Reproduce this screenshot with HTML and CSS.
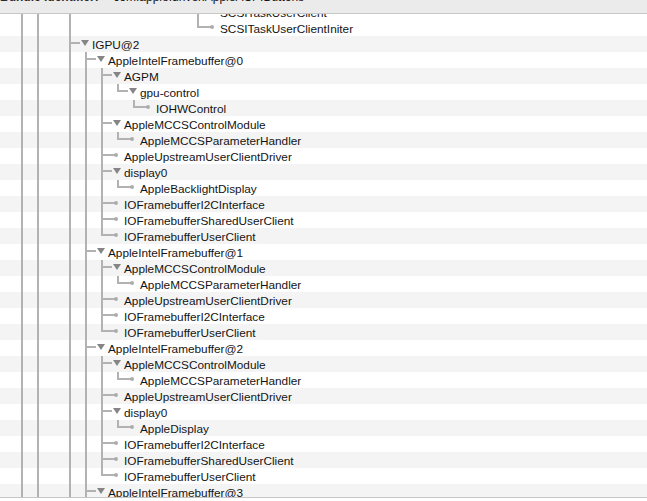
FILE: index.html
```html
<!DOCTYPE html>
<html lang="en">
<head>
  <meta charset="UTF-8" />
  <title>IORegistry Explorer</title>
  <link rel="stylesheet" href="styles.css">
</head>
<body>
  <div class="window">
    <div class="header">
      <span class="label">Bundle Identifier:</span>
      <span class="value">com.apple.driver.AppleACPIButtons</span>
    </div>
    <div class="tree" id="tree"></div>
    <div class="footer"></div>
  </div>

  <script>
    // guides: one char per 16px column -> '|' pipe, 't' tee, 'l' elbow, ' ' empty
    // node: 'v' expanded, 'o' leaf
    const rows = [
      ['|| |       t', 'o', 'SCSITaskUserClient'],
      ['|| |       l', 'o', 'SCSITaskUserClientIniter'],
      ['|| t', 'v', 'IGPU@2'],
      ['|| |t', 'v', 'AppleIntelFramebuffer@0'],
      ['|| ||t', 'v', 'AGPM'],
      ['|| |||l', 'v', 'gpu-control'],
      ['|| ||| l', 'o', 'IOHWControl'],
      ['|| ||t', 'v', 'AppleMCCSControlModule'],
      ['|| |||l', 'o', 'AppleMCCSParameterHandler'],
      ['|| ||t', 'o', 'AppleUpstreamUserClientDriver'],
      ['|| ||t', 'v', 'display0'],
      ['|| |||l', 'o', 'AppleBacklightDisplay'],
      ['|| ||t', 'o', 'IOFramebufferI2CInterface'],
      ['|| ||t', 'o', 'IOFramebufferSharedUserClient'],
      ['|| ||l', 'o', 'IOFramebufferUserClient'],
      ['|| |t', 'v', 'AppleIntelFramebuffer@1'],
      ['|| ||t', 'v', 'AppleMCCSControlModule'],
      ['|| |||l', 'o', 'AppleMCCSParameterHandler'],
      ['|| ||t', 'o', 'AppleUpstreamUserClientDriver'],
      ['|| ||t', 'o', 'IOFramebufferI2CInterface'],
      ['|| ||l', 'o', 'IOFramebufferUserClient'],
      ['|| |t', 'v', 'AppleIntelFramebuffer@2'],
      ['|| ||t', 'v', 'AppleMCCSControlModule'],
      ['|| |||l', 'o', 'AppleMCCSParameterHandler'],
      ['|| ||t', 'o', 'AppleUpstreamUserClientDriver'],
      ['|| ||t', 'v', 'display0'],
      ['|| |||l', 'o', 'AppleDisplay'],
      ['|| ||t', 'o', 'IOFramebufferI2CInterface'],
      ['|| ||t', 'o', 'IOFramebufferSharedUserClient'],
      ['|| ||l', 'o', 'IOFramebufferUserClient'],
      ['|| |t', 'v', 'AppleIntelFramebuffer@3']
    ];
    const guideClass = { '|': 'pipe', 't': 'tee', 'l': 'elbow', ' ': 'blank' };
    const tree = document.getElementById('tree');

    rows.forEach(([guides, node, name]) => {
      const row = document.createElement('div');
      row.className = 'row';
      let html = '';
      for (const ch of guides) html += `<span class="guide ${guideClass[ch]}"></span>`;
      html += `<span class="node ${node === 'v' ? 'open' : 'leaf'}"></span>`;
      html += `<span class="name">${name}</span>`;
      row.innerHTML = html;
      tree.appendChild(row);
    });
  </script>
</body>
</html>
```

FILE: styles.css
```css
:root {
  --header-bg: #ebebeb;
  --border: #c6c6c6;
  --stripe: #f4f4f4;
  --line: #b2b2b2;
  --twisty: #858585;
  --dot: #adadad;
  --text: #141414;
}
* {
  margin: 0;
  padding: 0;
  box-sizing: border-box;
}
body {
  background: #fff;
  font-family: 'Liberation Sans', Arial, sans-serif;
  font-size: 11.8px;
  color: var(--text);
}
.window {
  height: 501px;
  display: flex;
  flex-direction: column;
  overflow: hidden;
}
.header {
  flex: none;
  height: 14px;
  background: var(--header-bg);
  border-bottom: 1px solid var(--border);
  overflow: hidden;
  white-space: nowrap;
  line-height: 14px;
  font-size: 12px;
  position: relative;
  z-index: 1;
}
.header .label,
.header .value {
  display: inline-block;
  margin-top: -10px;
  vertical-align: top;
}
.header .label {
  font-weight: 700;
  color: #2a2a2a;
  width: 110px;
}
.tree {
  flex: none;
  height: 484px;
  border-bottom: 1px solid var(--border);
  overflow: hidden;
}
.row {
  display: flex;
  align-items: center;
  height: 16px;
  padding-left: 14px;
  white-space: nowrap;
}
.row:first-child {
  margin-top: -10px;
}
.row:nth-child(2n+3) {
  background: var(--stripe);
}
.guide {
  flex: none;
  width: 16px;
  height: 16px;
  position: relative;
}
.guide.pipe::before,
.guide.tee::before,
.guide.elbow::before {
  content: '';
  position: absolute;
  left: 7px;
  top: 0;
  width: 2px;
  height: 16px;
  background: var(--line);
}
.guide.elbow::before {
  height: 8px;
}
.guide.tee::after,
.guide.elbow::after {
  content: '';
  position: absolute;
  left: 7px;
  top: 6px;
  width: 9px;
  height: 2px;
  background: var(--line);
}
.node {
  flex: none;
  width: 14px;
  height: 16px;
  position: relative;
}
.node::before {
  content: '';
  position: absolute;
  left: 0;
  top: 6px;
  height: 2px;
  background: var(--line);
}
.node.open::before {
  width: 2px;
}
.node.leaf::before {
  width: 5px;
}
.node.open::after {
  content: '';
  position: absolute;
  left: 3px;
  top: 4px;
  border-left: 4px solid transparent;
  border-right: 4px solid transparent;
  border-top: 6px solid var(--twisty);
}
.node.leaf::after {
  content: '';
  position: absolute;
  left: 4px;
  top: 5px;
  width: 4px;
  height: 4px;
  border-radius: 50%;
  background: var(--dot);
}
.name {
  line-height: 16px;
  padding-top: 1px;
}
.footer {
  flex: 1;
  background: #fff;
}
```
